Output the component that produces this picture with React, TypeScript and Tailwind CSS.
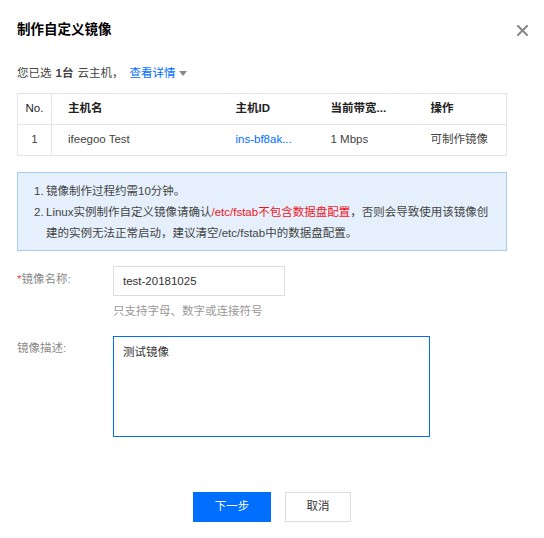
import React from "react";

// ─── Data ─────────────────────────────────────────────────────

const FONT = { fontFamily: '"Liberation Sans", "Noto Sans CJK SC", sans-serif' };

const rows = [
  { no: 1, name: "ifeegoo Test", id: "ins-bf8ak...", bw: "1 Mbps", op: "可制作镜像" },
];

// ─── Icons ────────────────────────────────────────────────────

function CloseIcon() {
  return (
    <svg width="11" height="11" viewBox="0 0 11 11" className="block">
      <path d="M1 1 L10 10 M10 1 L1 10" stroke="#888" strokeWidth="2" strokeLinecap="square" />
    </svg>
  );
}

function Caret() {
  return (
    <svg width="8" height="5" viewBox="0 0 8 5" className="ml-[4px] inline-block">
      <path d="M0 0 H8 L4 5 Z" fill="#888" />
    </svg>
  );
}

// ─── Component ────────────────────────────────────────────────

export default function App() {
  return (
    <div
      className="w-[544px] h-[538px] bg-white px-[17px] pt-[20px] text-[11.5px] text-[#333]"
      style={FONT}
    >
      {/* Header */}
      <div className="flex items-center justify-between">
        <h2 className="text-[13.5px] leading-[20px] font-bold text-black">制作自定义镜像</h2>
        <button className="mr-[-2px] p-[1px]">
          <CloseIcon />
        </button>
      </div>

      {/* Selection summary */}
      <div className="mt-[24px] leading-[18px] flex items-center text-[#444]">
        <span>您已选</span>
        <span className="font-bold mx-[4px]">1台</span>
        <span>云主机，</span>
        <a className="ml-[6px] text-[#006eff] flex items-center">
          查看详情
          <Caret />
        </a>
      </div>

      {/* Table */}
      <table className="mt-[11px] w-[490px] border-collapse border border-[#e2e6ec] table-fixed">
        <colgroup>
          <col className="w-[34px]" />
          <col className="w-[184px]" />
          <col className="w-[95px]" />
          <col className="w-[100px]" />
          <col />
        </colgroup>
        <thead>
          <tr className="h-[31px] border-b border-[#e2e6ec] text-[#222]">
            <th className="border-r border-[#e2e6ec] font-normal text-center">No.</th>
            <th className="text-left font-bold pl-[16px]">主机名</th>
            <th className="text-left font-bold">主机ID</th>
            <th className="text-left font-bold">当前带宽...</th>
            <th className="text-left font-bold">操作</th>
          </tr>
        </thead>
        <tbody>
          {rows.map((r) => (
            <tr key={r.no} className="h-[31px] text-[#444]">
              <td className="border-r border-[#e2e6ec] text-center">{r.no}</td>
              <td className="pl-[16px]">{r.name}</td>
              <td className="text-[#006eff]">{r.id}</td>
              <td>{r.bw}</td>
              <td>{r.op}</td>
            </tr>
          ))}
        </tbody>
      </table>

      {/* Notice */}
      <div className="mt-[16px] w-[490px] border border-[#a3cdf7] bg-[#e5f0fc] pl-[16px] pr-[10px] pt-[8px] pb-[6px] leading-[21px] text-[#444]">
        <div className="flex">
          <span className="w-[12px] shrink-0">1.</span>
          <span>镜像制作过程约需10分钟。</span>
        </div>
        <div className="flex">
          <span className="w-[12px] shrink-0">2.</span>
          <div>
            <div className="whitespace-nowrap">
              <span>Linux实例制作自定义镜像请确认</span>
              <span className="text-[#f0141e]">/etc/fstab不包含数据盘配置</span>
              <span>，否则会导致使用该镜像创</span>
            </div>
            <div>建的实例无法正常启动，建议清空/etc/fstab中的数据盘配置。</div>
          </div>
        </div>
      </div>

      {/* Form */}
      <div className="mt-[15px] flex">
        <label className="w-[96px] shrink-0 pt-[4px] leading-[18px] text-[#888]">
          <span className="text-[#e54545]">*</span>镜像名称:
        </label>
        <div>
          <input
            readOnly
            value="test-20181025"
            className="w-[172px] h-[30px] border border-[#dddddd] px-[9px] text-[11.5px] text-[#333] outline-none"
            style={FONT}
          />
          <div className="mt-[6px] leading-[18px] text-[#999]">只支持字母、数字或连接符号</div>
        </div>
      </div>

      <div className="mt-[16px] flex">
        <label className="w-[96px] shrink-0 pt-[3px] leading-[18px] text-[#888]">镜像描述:</label>
        <textarea
          readOnly
          value="测试镜像"
          className="w-[317px] h-[101px] border border-[#006eff] px-[9px] py-[6px] leading-[18px] text-[11.5px] text-[#333] outline-none resize-none"
          style={FONT}
        />
      </div>

      {/* Actions */}
      <div className="mt-[55px] flex justify-center gap-[14px]">
        <button className="w-[78px] h-[30px] bg-[#006eff] text-white">下一步</button>
        <button className="w-[66px] h-[30px] border border-[#dddddd] bg-white text-[#333]">取消</button>
      </div>
    </div>
  );
}
